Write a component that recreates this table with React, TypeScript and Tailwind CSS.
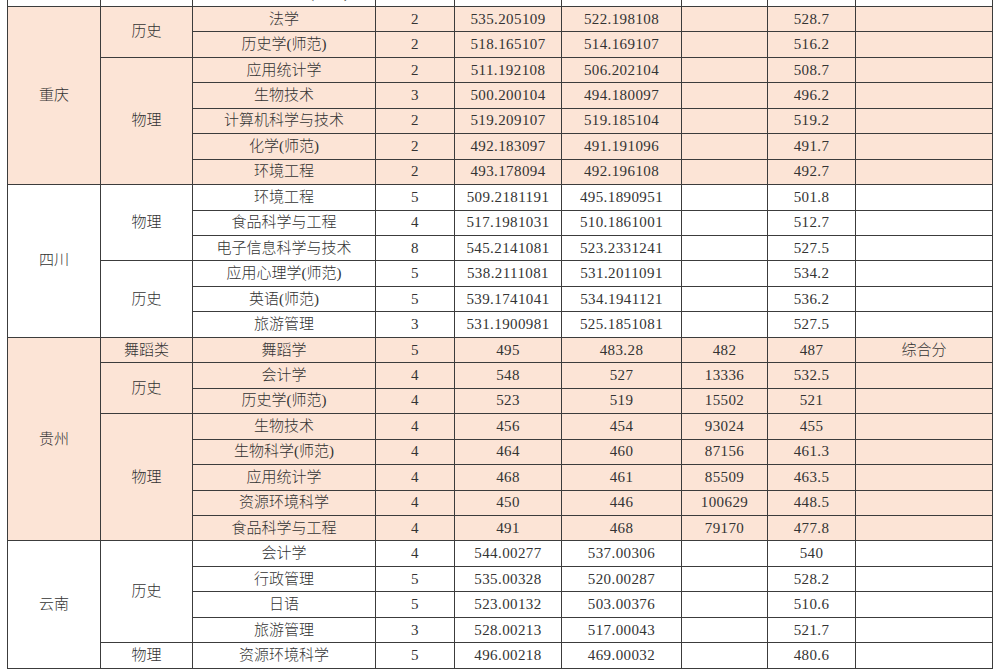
type Row = {
  major: string;
  num: string;
  max: string;
  min: string;
  rank: string;
  avg: string;
  note: string;
};

type Group = { subject: string; rows: Row[] };
type Province = { name: string; fill: boolean; groups: Group[] };

const r = (major: string, num: string, max: string, min: string, rank: string, avg: string, note = ""): Row => ({
  major,
  num,
  max,
  min,
  rank,
  avg,
  note,
});

const data: Province[] = [
  {
    name: "重庆",
    fill: true,
    groups: [
      {
        subject: "历史",
        rows: [
          r("法学", "2", "535.205109", "522.198108", "", "528.7"),
          r("历史学(师范)", "2", "518.165107", "514.169107", "", "516.2"),
        ],
      },
      {
        subject: "物理",
        rows: [
          r("应用统计学", "2", "511.192108", "506.202104", "", "508.7"),
          r("生物技术", "3", "500.200104", "494.180097", "", "496.2"),
          r("计算机科学与技术", "2", "519.209107", "519.185104", "", "519.2"),
          r("化学(师范)", "2", "492.183097", "491.191096", "", "491.7"),
          r("环境工程", "2", "493.178094", "492.196108", "", "492.7"),
        ],
      },
    ],
  },
  {
    name: "四川",
    fill: false,
    groups: [
      {
        subject: "物理",
        rows: [
          r("环境工程", "5", "509.2181191", "495.1890951", "", "501.8"),
          r("食品科学与工程", "4", "517.1981031", "510.1861001", "", "512.7"),
          r("电子信息科学与技术", "8", "545.2141081", "523.2331241", "", "527.5"),
        ],
      },
      {
        subject: "历史",
        rows: [
          r("应用心理学(师范)", "5", "538.2111081", "531.2011091", "", "534.2"),
          r("英语(师范)", "5", "539.1741041", "534.1941121", "", "536.2"),
          r("旅游管理", "3", "531.1900981", "525.1851081", "", "527.5"),
        ],
      },
    ],
  },
  {
    name: "贵州",
    fill: true,
    groups: [
      { subject: "舞蹈类", rows: [r("舞蹈学", "5", "495", "483.28", "482", "487", "综合分")] },
      {
        subject: "历史",
        rows: [
          r("会计学", "4", "548", "527", "13336", "532.5"),
          r("历史学(师范)", "4", "523", "519", "15502", "521"),
        ],
      },
      {
        subject: "物理",
        rows: [
          r("生物技术", "4", "456", "454", "93024", "455"),
          r("生物科学(师范)", "4", "464", "460", "87156", "461.3"),
          r("应用统计学", "4", "468", "461", "85509", "463.5"),
          r("资源环境科学", "4", "450", "446", "100629", "448.5"),
          r("食品科学与工程", "4", "491", "468", "79170", "477.8"),
        ],
      },
    ],
  },
  {
    name: "云南",
    fill: false,
    groups: [
      {
        subject: "历史",
        rows: [
          r("会计学", "4", "544.00277", "537.00306", "", "540"),
          r("行政管理", "5", "535.00328", "520.00287", "", "528.2"),
          r("日语", "5", "523.00132", "503.00376", "", "510.6"),
          r("旅游管理", "3", "528.00213", "517.00043", "", "521.7"),
        ],
      },
      { subject: "物理", rows: [r("资源环境科学", "5", "496.00218", "469.00032", "", "480.6")] },
    ],
  },
];

const td = "border border-[#3c3c3c] text-center align-middle p-0 h-[25.46px] leading-none whitespace-nowrap";
const tdNum = td + " tracking-[0.4px]";

export default function App() {
  return (
    <div
      className="w-[1000px] h-[670px] overflow-hidden bg-white text-[#333] text-[15px]"
      style={{ fontFamily: '"Liberation Serif", "Noto Sans CJK SC", serif' }}
    >
      <table className="ml-[7px] mt-[-19.5px] w-[985px] table-fixed border-collapse font-light">
        <colgroup>
          <col className="w-[93px]" />
          <col className="w-[92px]" />
          <col className="w-[183px]" />
          <col className="w-[79px]" />
          <col className="w-[107px]" />
          <col className="w-[120px]" />
          <col className="w-[86px]" />
          <col className="w-[88px]" />
          <col className="w-[137px]" />
        </colgroup>
        <tbody>
          {/* row cut off by the top edge of the screenshot */}
          <tr>
            <td className={td}></td>
            <td className={td}></td>
            <td className={td}>思想政治教育(师范)</td>
            <td className={td}></td>
            <td className={td}></td>
            <td className={td}></td>
            <td className={td}></td>
            <td className={td}></td>
            <td className={td}></td>
          </tr>
          {data.map((p) => {
            const total = p.groups.reduce((n, g) => n + g.rows.length, 0);
            const bg = p.fill ? "bg-[#fce4d6]" : "bg-white";
            return p.groups.flatMap((g, gi) =>
              g.rows.map((row, ri) => (
                <tr key={p.name + g.subject + row.major} className={bg}>
                  {gi === 0 && ri === 0 && (
                    <td className={td} rowSpan={total}>
                      {p.name}
                    </td>
                  )}
                  {ri === 0 && (
                    <td className={td} rowSpan={g.rows.length}>
                      {g.subject}
                    </td>
                  )}
                  <td className={td}>{row.major}</td>
                  <td className={tdNum}>{row.num}</td>
                  <td className={tdNum}>{row.max}</td>
                  <td className={tdNum}>{row.min}</td>
                  <td className={tdNum}>{row.rank}</td>
                  <td className={tdNum}>{row.avg}</td>
                  <td className={td}>{row.note}</td>
                </tr>
              ))
            );
          })}
        </tbody>
      </table>
    </div>
  );
}
